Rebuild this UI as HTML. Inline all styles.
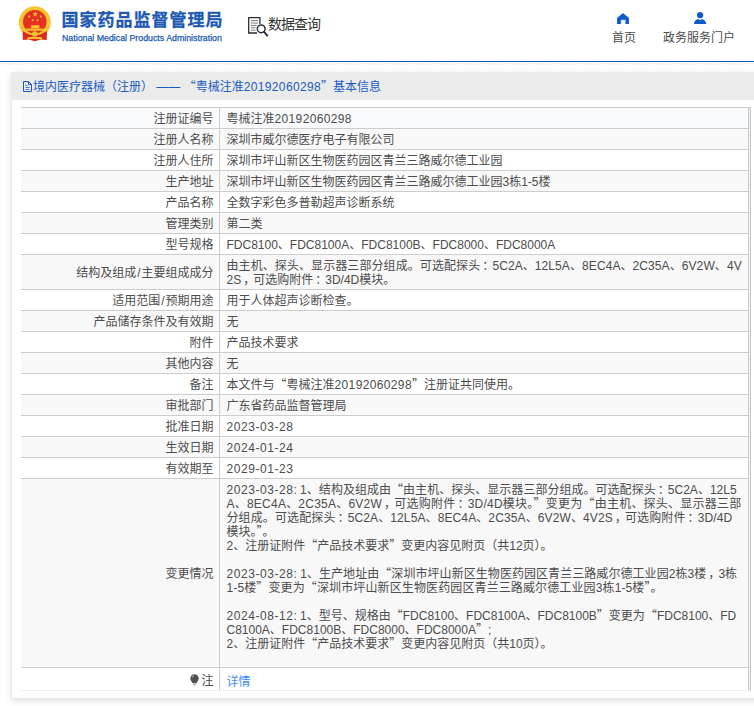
<!DOCTYPE html>
<html lang="zh-CN">
<head>
<meta charset="utf-8">
<title>国家药品监督管理局 数据查询</title>
<style>
html,body{margin:0;padding:0;}
body{width:754px;height:706px;overflow:hidden;background:#fff;position:relative;
  font-family:"Liberation Sans","Noto Sans CJK SC",sans-serif;font-size:12px;color:#4c4c4c;}
.fw{font-family:"Noto Sans CJK SC",sans-serif;line-height:0;}
.d{letter-spacing:0.55px;}
.n{letter-spacing:0.36px;}
.hdr{position:absolute;left:0;top:0;width:754px;height:61px;background:#fff;}
.hline{position:absolute;left:0;top:61px;width:754px;height:1px;background:#0b5bbf;}
.hatch{position:absolute;left:0;top:62px;width:754px;height:3px;}
.emblem{position:absolute;left:14px;top:2px;width:44px;height:44px;}
.t1{-webkit-text-stroke:0.3px #2059b2;position:absolute;left:61.6px;top:10.4px;font-size:17px;line-height:22px;font-weight:bold;color:#2059b2;letter-spacing:1px;white-space:nowrap;}
.t2{-webkit-text-stroke:0.25px #2059b2;position:absolute;left:62px;top:31.5px;font-size:8.8px;line-height:12px;color:#2059b2;white-space:nowrap;}
.q{position:absolute;left:268px;top:14px;font-size:14px;line-height:20px;color:#333;letter-spacing:-1px;white-space:nowrap;}
.qi{position:absolute;left:247px;top:16px;width:22px;height:21px;}
.nav{position:absolute;top:30px;font-size:12px;line-height:16px;color:#4c4c4c;white-space:nowrap;}
.ni{position:absolute;}
.box{position:absolute;left:11px;top:72px;width:760px;height:626px;background:#fff;border:1px solid #e9e9ec;border-top:0;border-radius:0 0 2px 2px;box-shadow:0 2px 7px 0 rgba(0,0,0,0.12);}
.bar{position:absolute;left:-1px;top:0;width:100%;height:27px;background:#ebebeb;border-bottom:1px solid #ebeef5;}
.bar span.t{position:absolute;left:22px;top:8px;line-height:14px;color:#1a5cc0;white-space:nowrap;}
.bar svg{position:absolute;left:11px;top:9px;}
.tw{position:absolute;left:9px;top:35px;width:729px;background:#ebeef5;border-top:1px solid #c9c9c9;border-right:1px solid #c9c9c9;}
table{width:728px;border-collapse:collapse;table-layout:fixed;}
td{padding:4px 5.5px 2px 6px;line-height:14px;font-size:12px;border-bottom:1px solid #cdcdcd;vertical-align:middle;word-break:break-all;}
td.l{width:186.5px;text-align:right;border-right:1px solid #cdcdcd;}
td.v{padding-left:6.5px;border-right:1px solid #cdcdcd;}
tr.a td{background:#f9fafc;}
tr.b td{background:#f8f8f8;}
tr.c td{background:#fff;}
tr.last td{height:16px;padding-top:5px;padding-bottom:1px;border-bottom:1px solid #ebeef5;}
tr.last a{position:relative;top:1px;}
.s{padding:0 1px;}
.p{position:relative;left:2px;}
.bulb{display:inline-block;vertical-align:-1px;margin-right:2.5px;}
a{color:#3b8cff;text-decoration:none;}
</style>
</head>
<body>
<div class="hdr">
  <svg class="emblem" viewBox="14 2 44 44">
    <circle cx="34.8" cy="22.2" r="16" fill="#f6c62e"/>
    <circle cx="34.8" cy="21.8" r="11.8" fill="#e73024"/>
    <path d="M22.6 31 Q34.8 39.4 47 31 L46.7 40 L41 39.4 L34.8 41.2 L28.6 39.4 L22.9 40 Z" fill="#d92a1f"/>
    <polygon fill="#f6c62e" points="35.2,11.3 35.9,13.3 38,13.3 36.3,14.6 36.9,16.6 35.2,15.4 33.5,16.6 34.1,14.6 32.4,13.3 34.5,13.3"/>
    <circle cx="29.1" cy="16.6" r="1.05" fill="#f6c62e"/>
    <circle cx="40.9" cy="16.6" r="1.05" fill="#f6c62e"/>
    <circle cx="32.7" cy="20.2" r="1.05" fill="#f6c62e"/>
    <circle cx="37.6" cy="20.2" r="1.05" fill="#f6c62e"/>
    <path d="M30.4 26.6 L31.4 25.2 H39 L40 26.6 Z M31.2 26.6 H39.2 V28.4 H31.2 Z" fill="#f6c62e"/>
    <path d="M25.9 28.5 H44 V30.8 H25.9 Z" fill="#f1b92a"/>
    <circle cx="34.8" cy="33.9" r="2.7" fill="#f6c62e"/>
    <path d="M27.2 37.6 Q34.8 35.8 42.4 37.6 L41.8 39.6 Q34.8 37.8 27.8 39.6 Z" fill="#f6c62e"/>
  </svg>
  <div class="t1">国家药品监督管理局</div>
  <div class="t2">National Medical Products Administration</div>
  <svg class="qi" viewBox="0 0 22 21" fill="none" stroke="#2b2b3a" stroke-width="1.3">
    <path d="M10 17 H1.7 V1.7 H12.9 V8"/>
    <path d="M4 4.6h7M4 7h7M4 9.4h5.5M4 11.8h4.5M4 14.2h4.5" stroke-width="1" stroke="#777"/>
    <circle cx="14.2" cy="12.8" r="3.9" stroke-width="1.5" fill="#fff"/>
    <path d="M17.1 15.9 L20.3 19.6" stroke-width="1.9" stroke-linecap="round"/>
  </svg>
  <div class="q">数据查询</div>

  <svg class="ni" style="left:617px;top:13px" width="12" height="11" viewBox="0 0 12 11"><path d="M6 0.2 L11.9 5 V10.9 H8.6 V6.8 H3.8 V10.9 H0.1 V5 Z" fill="#0f5cc8" stroke="#0f5cc8" stroke-width="0.3" stroke-linejoin="round"/></svg>
  <div class="nav" style="left:612px">首页</div>
  <svg class="ni" style="left:693px;top:12px" width="14" height="12" viewBox="0 0 14 12"><circle cx="7.1" cy="3.2" r="3.1" fill="#0f5cc8"/><path d="M1 12 C1 8.8 3.6 7.2 5.2 6.9 L7.1 8.3 L9 6.9 C10.6 7.2 13.2 8.8 13.2 12 Z" fill="#0f5cc8"/></svg>
  <div class="nav" style="left:663px">政务服务门户</div>
</div>
<div class="hline"></div>
<svg class="hatch" width="754" height="3" shape-rendering="crispEdges"><defs><pattern id="hp" width="3" height="3" patternUnits="userSpaceOnUse"><rect x="1" y="0" width="1" height="1" fill="#f1ede9"/><rect x="0" y="1" width="1" height="1" fill="#e5e5e5"/><rect x="2" y="2" width="1" height="1" fill="#ececec"/></pattern></defs><rect width="754" height="3" fill="url(#hp)"/></svg>

<div class="box">
  <div class="bar">
    <svg width="11" height="11" viewBox="0 0 11 11" fill="none" stroke="#1a5cc0" stroke-width="1"><path d="M1.5 0.5 H6.5 L9.5 3.5 V10.5 H1.5 Z M6.5 0.5 V3.5 H9.5" stroke-linejoin="round"/><path d="M3.4 4.5h2M3.4 6.5h4.2M3.4 8.5h4.2" stroke-width="0.9" opacity="0.85"/></svg>
    <span class="t">境内医疗器械（注册） —— <span class="fw">“</span>粤械注准<span class="n">20192060298</span><span class="fw">”</span>基本信息</span>
  </div>
  <div class="tw">
  <table>
    <tr class="a"><td class="l">注册证编号</td><td class="v">粤械注准<span class="n">20192060298</span></td></tr>
    <tr class="b"><td class="l">注册人名称</td><td class="v">深圳市威尔德医疗电子有限公司</td></tr>
    <tr class="c"><td class="l">注册人住所</td><td class="v">深圳市坪山新区生物医药园区青兰三路威尔德工业园</td></tr>
    <tr class="b"><td class="l">生产地址</td><td class="v">深圳市坪山新区生物医药园区青兰三路威尔德工业园3栋1-5楼</td></tr>
    <tr class="c"><td class="l">产品名称</td><td class="v">全数字彩色多普勒超声诊断系统</td></tr>
    <tr class="b"><td class="l">管理类别</td><td class="v">第二类</td></tr>
    <tr class="c"><td class="l">型号规格</td><td class="v">FDC8100、FDC8100A、FDC8100B、FDC8000、FDC8000A</td></tr>
    <tr class="b"><td class="l">结构及组成<span class="s">/</span>主要组成成分</td><td class="v"><span style="letter-spacing:0.085px">由主机、探头、显示器三部分组成。可选配探头<span class="p">：</span>5C2A、12L5A、8EC4A、2C35A、6V2W、4V</span><br>2S<span class="p">，</span>可选购附件<span class="p">：</span>3D/4D模块。</td></tr>
    <tr class="c"><td class="l">适用范围<span class="s">/</span>预期用途</td><td class="v">用于人体超声诊断检查。</td></tr>
    <tr class="b"><td class="l">产品储存条件及有效期</td><td class="v">无</td></tr>
    <tr class="c"><td class="l">附件</td><td class="v">产品技术要求</td></tr>
    <tr class="b"><td class="l">其他内容</td><td class="v">无</td></tr>
    <tr class="c"><td class="l">备注</td><td class="v">本文件与<span class="fw">“</span>粤械注准<span class="n">20192060298</span><span class="fw">”</span>注册证共同使用。</td></tr>
    <tr class="b"><td class="l">审批部门</td><td class="v">广东省药品监督管理局</td></tr>
    <tr class="c"><td class="l">批准日期</td><td class="v"><span class="d">2023-03-28</span></td></tr>
    <tr class="b"><td class="l">生效日期</td><td class="v"><span class="d">2024-01-24</span></td></tr>
    <tr class="c"><td class="l">有效期至</td><td class="v"><span class="d">2029-01-23</span></td></tr>
    <tr class="b"><td class="l">变更情况</td><td class="v"><span style="letter-spacing:0.03px"><span class="d">2023-03-28</span>: 1、结构及组成由<span class="fw">“</span>由主机、探头、显示器三部分组成。可选配探头<span class="p">：</span>5C2A、12L5</span><br><span style="letter-spacing:0.23px">A、8EC4A、2C35A、6V2W<span class="p">，</span>可选购附件<span class="p">：</span>3D/4D模块。<span class="fw">”</span>变更为<span class="fw">“</span>由主机、探头、显示器三部</span><br><span style="letter-spacing:0.115px">分组成。可选配探头<span class="p">：</span>5C2A、12L5A、8EC4A、2C35A、6V2W、4V2S<span class="p">，</span>可选购附件<span class="p">：</span>3D/4D</span><br>模块。<span class="fw">”</span>。<br>2、注册证附件<span class="fw">“</span>产品技术要求<span class="fw">”</span>变更内容见附页（共12页）。<br><br><span style="letter-spacing:0.06px"><span class="d">2023-03-28</span>: 1、生产地址由<span class="fw">“</span>深圳市坪山新区生物医药园区青兰三路威尔德工业园2栋3楼<span class="p">，</span>3栋</span><br><span style="letter-spacing:0.12px">1-5楼<span class="fw">”</span>变更为<span class="fw">“</span>深圳市坪山新区生物医药园区青兰三路威尔德工业园3栋1-5楼<span class="fw">”</span>。</span><br><br><span class="d">2024-08-12</span>: 1、型号、规格由<span class="fw">“</span>FDC8100、FDC8100A、FDC8100B<span class="fw">”</span>变更为<span class="fw">“</span>FDC8100、FD<br>C8100A、FDC8100B、FDC8000、FDC8000A<span class="fw">”</span>;<br>2、注册证附件<span class="fw">“</span>产品技术要求<span class="fw">”</span>变更内容见附页（共10页）。<br><br></td></tr>
    <tr class="c last"><td class="l"><svg class="bulb" width="9" height="12" viewBox="0 0 9 12"><path d="M4.5 0.3 C2 0.3 0.3 2.1 0.3 4.4 C0.3 6 1.2 6.9 1.9 7.8 L2.4 9 H6.6 L7.1 7.8 C7.8 6.9 8.7 6 8.7 4.4 C8.7 2.1 7 0.3 4.5 0.3 Z" fill="#505050"/><path d="M2.7 9.9 H6.3 M3.3 11 H5.7" stroke="#9a938a" stroke-width="0.9"/><path d="M2 3.4 C2.3 2.5 3 1.9 3.9 1.8" stroke="#d8d8d8" stroke-width="0.9" fill="none"/></svg>注</td><td class="v"><a>详情</a></td></tr>
  </table>
  </div>
</div>
</body>
</html>
